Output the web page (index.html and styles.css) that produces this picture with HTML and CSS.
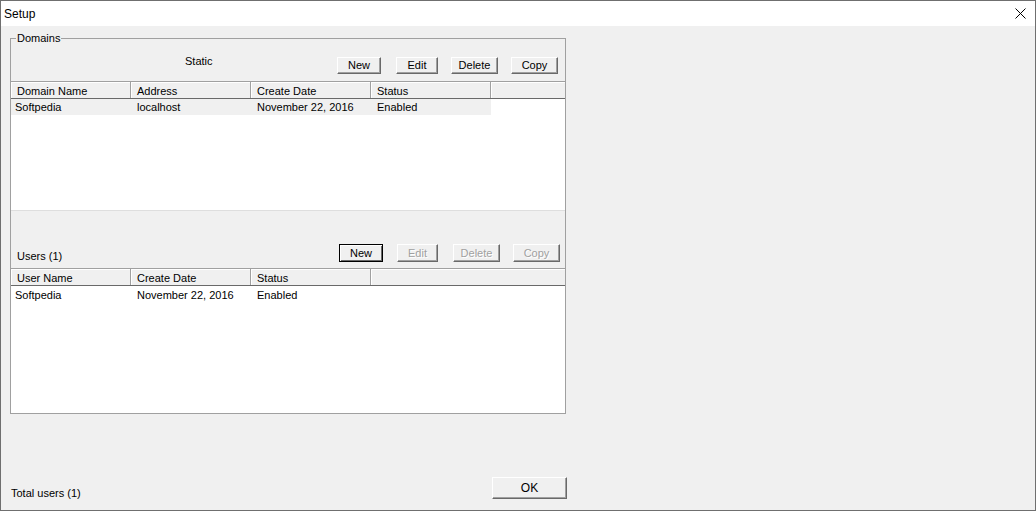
FILE: index.html
```html
<!DOCTYPE html>
<html lang="en">
<head>
    <meta charset="UTF-8">
    <title>Setup</title>
    <link rel="stylesheet" href="styles.css">
</head>
<body>
    <div class="window">
        <div class="titlebar">
            <span class="title">Setup</span>
            <svg class="close" width="11" height="11" viewBox="0 0 11 11">
                <path d="M0.5 0.5 L10.5 10.5 M10.5 0.5 L0.5 10.5" stroke="#000" stroke-width="1" fill="none"/>
            </svg>
        </div>

        <div class="content">
            <div class="group">
                <span class="legend">Domains</span>

                <div class="toolbar domains-bar">
                    <span class="caption static">Static</span>
                    <div class="buttons">
                        <button class="btn w-new">New</button>
                        <button class="btn w-edit">Edit</button>
                        <button class="btn w-delete">Delete</button>
                        <button class="btn w-copy">Copy</button>
                    </div>
                </div>

                <div class="list domains">
                    <div class="list-head">
                        <div class="col">Domain Name</div>
                        <div class="col">Address</div>
                        <div class="col">Create Date</div>
                        <div class="col">Status</div>
                        <div class="col fill"></div>
                    </div>
                    <div class="list-body">
                        <div class="row selected">
                            <div class="cell first">Softpedia</div>
                            <div class="cell">localhost</div>
                            <div class="cell">November 22, 2016</div>
                            <div class="cell">Enabled</div>
                        </div>
                    </div>
                </div>

                <div class="toolbar users-bar">
                    <span class="caption users">Users (1)</span>
                    <div class="buttons">
                        <button class="btn w-new focused">New</button>
                        <button class="btn w-edit" disabled>Edit</button>
                        <button class="btn w-delete" disabled>Delete</button>
                        <button class="btn w-copy" disabled>Copy</button>
                    </div>
                </div>

                <div class="list users-list">
                    <div class="list-head">
                        <div class="col">User Name</div>
                        <div class="col">Create Date</div>
                        <div class="col">Status</div>
                        <div class="col fill"></div>
                    </div>
                    <div class="list-body">
                        <div class="row">
                            <div class="cell first">Softpedia</div>
                            <div class="cell">November 22, 2016</div>
                            <div class="cell">Enabled</div>
                        </div>
                    </div>
                </div>
            </div>

            <div class="footer">
                <span class="total">Total users (1)</span>
                <button class="btn ok">OK</button>
            </div>
        </div>
    </div>
</body>
</html>
```

FILE: styles.css
```css
* {
    margin: 0;
    padding: 0;
    box-sizing: border-box;
}

body {
    width: 1036px;
    height: 511px;
    overflow: hidden;
    font-family: 'Liberation Sans', Arial, sans-serif;
    font-size: 11px;
    color: #000;
    background: #f0f0f0;
}

.window {
    width: 1036px;
    height: 511px;
    border: 1px solid #6f6f6f;
    display: flex;
    flex-direction: column;
    background: #f0f0f0;
}

.titlebar {
    height: 25px;
    background: #fff;
    display: flex;
    align-items: center;
    justify-content: space-between;
    padding: 0 9px 0 3px;
}

.title {
    font-size: 12px;
    line-height: 14px;
}

.close {
    display: block;
}

.content {
    flex: 1;
    display: flex;
    flex-direction: column;
    padding: 12px 0 0 9px;
}

/* group box */
.group {
    position: relative;
    width: 556px;
    height: 376px;
    border: 1px solid #a0a0a0;
    display: flex;
    flex-direction: column;
}

.legend {
    position: absolute;
    top: -7px;
    left: 5px;
    padding: 0 1px;
    line-height: 13px;
    background: #f0f0f0;
}

.toolbar {
    display: flex;
    align-items: flex-start;
}

.domains-bar {
    height: 42px;
}

.users-bar {
    height: 57px;
}

.caption {
    line-height: 13px;
}

.static {
    margin: 16px 0 0 174px;
}

.users {
    margin: 39px 0 0 6px;
}

.buttons {
    display: flex;
    margin-left: auto;
}

.btn {
    height: 18px;
    font-family: 'Liberation Sans', Arial, sans-serif;
    font-size: 11px;
    color: #000;
    background: #f0f0f0;
    border: 1px solid;
    border-color: #fff #696969 #696969 #fff;
    box-shadow: inset -1px -1px #a0a0a0;
}

/* top button row */
.domains-bar .buttons {
    margin-top: 18px;
    margin-right: 7px;
}

.domains-bar .btn {
    height: 17px;
    padding-bottom: 1px;
}

.domains-bar .w-new { width: 44px; }
.domains-bar .w-edit { width: 42px; margin-left: 15px; }
.domains-bar .w-delete { width: 47px; margin-left: 13px; }
.domains-bar .w-copy { width: 47px; margin-left: 13px; }

/* users button row */
.users-bar .buttons {
    margin-top: 33px;
    margin-right: 5px;
}

.users-bar .w-new { width: 44px; }
.users-bar .w-edit { width: 41px; margin-left: 14px; }
.users-bar .w-delete { width: 47px; margin-left: 15px; }
.users-bar .w-copy { width: 47px; margin-left: 13px; }

.btn:disabled {
    color: #a0a0a0;
    text-shadow: 1px 1px #fff;
}

.btn.focused {
    border-color: #000;
    box-shadow: inset 1px 1px #fff, inset -1px -1px #696969;
}

/* list views */
.list {
    display: flex;
    flex-direction: column;
}

.list-head {
    height: 18px;
    display: flex;
    background: #f0f0f0;
    border-top: 1px solid #a0a0a0;
    border-bottom: 1px solid #696969;
    box-shadow: inset 0 1px #fff;
}

.col {
    width: 120px;
    padding: 2px 0 0 6px;
    line-height: 14px;
    border-right: 1px solid #a0a0a0;
    box-shadow: inset 1px 0 #fff;
    white-space: nowrap;
}

.col.fill {
    flex: 1;
    border-right: none;
}

.list-body {
    background: #fff;
}

.domains .list-body {
    height: 112px;
    border-bottom: 1px solid #dedede;
}

.users-list {
    flex: 1;
}

.users-list .list-body {
    flex: 1;
    padding-top: 1px;
}

.row {
    display: flex;
    width: 480px;
    height: 16px;
}

.row.selected {
    background: #f0f0f0;
}

.cell {
    width: 120px;
    padding-left: 6px;
    line-height: 16px;
    white-space: nowrap;
}

.cell.first {
    padding-left: 4px;
}

/* footer */
.footer {
    margin-top: auto;
    width: 557px;
    display: flex;
    align-items: flex-end;
    justify-content: space-between;
    padding: 0 0 11px 1px;
}

.total {
    line-height: 13px;
    margin-bottom: -1px;
}

.btn.ok {
    width: 75px;
    height: 22px;
    font-size: 12px;
}
```
